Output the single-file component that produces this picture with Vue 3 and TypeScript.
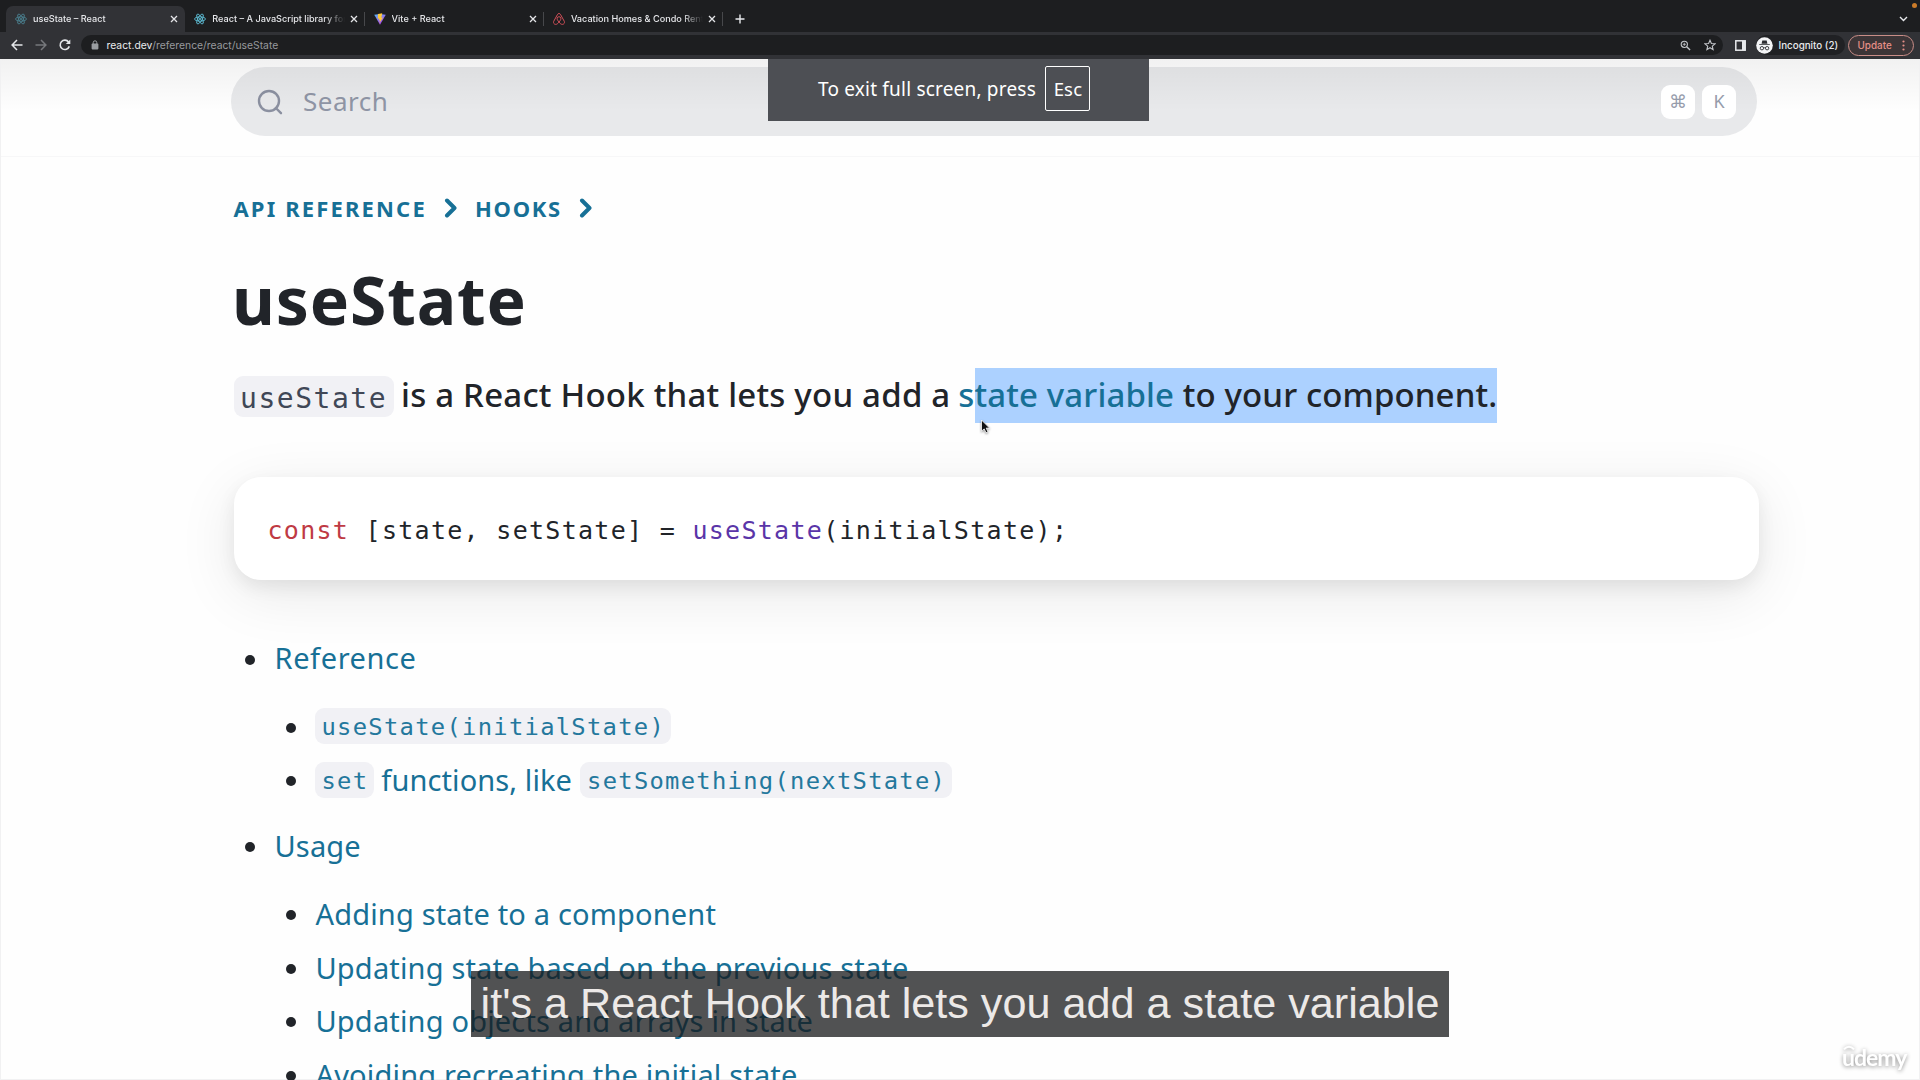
<script setup lang="ts">
interface Tab {
  title: string
  icon: 'react' | 'vite' | 'airbnb'
  active?: boolean
  dim?: boolean
}

const tabs: Tab[] = [
  { title: 'useState – React', icon: 'react', active: true, dim: true },
  { title: 'React – A JavaScript library for', icon: 'react' },
  { title: 'Vite + React', icon: 'vite' },
  { title: 'Vacation Homes & Condo Rent', icon: 'airbnb' },
]

const usage: string[] = [
  'Adding state to a component',
  'Updating state based on the previous state',
  'Updating objects and arrays in state',
  'Avoiding recreating the initial state',
]
</script>

<template>
  <div class="screen">
    <header class="chrome">
      <div class="tabstrip">
        <div v-for="tab in tabs" :key="tab.title" class="tab" :class="{ active: tab.active }">
          <svg v-if="tab.icon === 'react'" class="fav" :class="{ dim: tab.dim }" viewBox="0 0 24 24" fill="none" stroke="#61c6df" stroke-width="1.7">
            <ellipse cx="12" cy="12" rx="11" ry="4.3" />
            <ellipse cx="12" cy="12" rx="11" ry="4.3" transform="rotate(60 12 12)" />
            <ellipse cx="12" cy="12" rx="11" ry="4.3" transform="rotate(120 12 12)" />
            <circle cx="12" cy="12" r="2" fill="#61c6df" stroke="none" />
          </svg>
          <svg v-else-if="tab.icon === 'vite'" class="fav" viewBox="0 0 24 24">
            <defs>
              <linearGradient id="viteBody" x1="0" y1="0" x2="0.6" y2="1">
                <stop offset="0" stop-color="#52b5f5" />
                <stop offset="1" stop-color="#b545e8" />
              </linearGradient>
            </defs>
            <path d="M0.5 3.5 12 1.8 23.5 3.5 12 23.5Z" fill="url(#viteBody)" />
            <path d="M16.5 0.5 8 2.2 7.6 11.5 10.6 10.9 9.9 15 12 14.4 11 19.5 18 9 14.6 9.6Z" fill="#ffc93a" />
          </svg>
          <svg v-else class="fav" viewBox="0 0 24 24" fill="none" stroke="#d9525c" stroke-width="1.9">
            <path d="M12 18.2C9.6 15.3 8.2 13 8.2 11.2a3.8 3.8 0 0 1 7.6 0c0 1.8-1.4 4.1-3.8 7-2.3 2.9-4.3 4.6-6.6 4.6a4.3 4.3 0 0 1-4-6.1L8.7 3.5C9.6 1.7 10.5 1 12 1s2.4.7 3.3 2.5l7.3 13.2a4.3 4.3 0 0 1-4 6.1c-2.3 0-4.3-1.700-6.600-4.600Z" />
          </svg>
          <span class="title">{{ tab.title }}</span>
          <svg class="close" viewBox="0 0 8 8" stroke="#e4e5e8" stroke-width="1.3"><path d="M1 1 7 7M7 1 1 7" /></svg>
        </div>
        <svg class="plus" viewBox="0 0 10 10" stroke="#e8eaed" stroke-width="1.4"><path d="M5 .5V9.500M.5 5H9.500" /></svg>
        <svg class="tabmenu" viewBox="0 0 9 6" fill="none" stroke="#e8eaed" stroke-width="1.400"><path d="M1 1 4.500 4.500 8 1" /></svg>
        <i class="recording"></i>
      </div>
      <div class="toolbar">
        <svg class="nav" viewBox="0 0 12 12" fill="none" stroke="#e4e6e9" stroke-width="1.500"><path d="M11.500 6H1.200M6 1 1.100 6 6 11" /></svg>
        <svg class="nav" viewBox="0 0 12 12" fill="none" stroke="#76787c" stroke-width="1.500"><path d="M.5 6H10.800M6 1 10.900 6 6 11" /></svg>
        <svg class="nav" viewBox="0 0 12 12" fill="none" stroke="#e4e6e9" stroke-width="1.600"><path d="M10.300 7.400A4.700 4.700 0 1 1 9.600 2.900" /><path d="M11.300.6V5.100H6.800Z" fill="#e4e6e9" stroke="none" /></svg>
        <div class="omnibox">
          <svg class="lock" viewBox="0 0 8 10"><rect x=".6" y="3.600" width="6.800" height="5.800" rx=".8" fill="#9a9da1" /><path d="M2.200 4V2.600a1.800 1.800 0 0 1 3.600 0V4" fill="none" stroke="#9a9da1" stroke-width="1" /></svg>
          <span class="host">react.dev</span><span class="path">/reference/react/useState</span>
          <svg class="mag" viewBox="0 0 12 12" fill="none" stroke="#c2c5c9"><circle cx="4.700" cy="4.700" r="3.400" stroke-width="1.200" /><path d="M7.300 7.300 11 11" stroke-width="1.500" /><path d="M3 4.700H6.400M4.700 3V6.400" stroke-width=".9" /></svg>
          <svg class="star" viewBox="0 0 12 12" fill="none" stroke="#c2c5c9" stroke-width="1.100"><path d="M6 1.200 7.400 4.500 11 4.800 8.300 7.100 9.100 10.600 6 8.700 2.900 10.600 3.700 7.100 1 4.800 4.600 4.500Z" /></svg>
        </div>
        <svg class="panel" viewBox="0 0 11 11"><rect x=".8" y=".8" width="9.400" height="9.400" fill="none" stroke="#e8eaed" stroke-width="1.500" /><rect x="7" y="1" width="3.500" height="9" fill="#e8eaed" /></svg>
        <div class="incognito">
          <svg viewBox="0 0 17 17">
            <circle cx="8.500" cy="8.500" r="8.300" fill="#f3f4f6" />
            <path d="M5.600 6.800 6.300 3.600H10.700L11.400 6.800ZM3.200 7.200H13.800V8.100H3.200Z" fill="#2b2c30" />
            <path d="M7.600 11C8.200 10.600 8.800 10.600 9.400 11" fill="none" stroke="#2b2c30" stroke-width=".8" />
            <circle cx="5.900" cy="11.200" r="1.700" fill="none" stroke="#2b2c30" stroke-width=".9" />
            <circle cx="11.100" cy="11.200" r="1.700" fill="none" stroke="#2b2c30" stroke-width=".9" />
          </svg>
          <span>Incognito (2)</span>
        </div>
        <div class="update">
          <span>Update</span>
          <svg viewBox="0 0 3 11" fill="#e58f87"><circle cx="1.500" cy="1.500" r="1.100" /><circle cx="1.500" cy="5.500" r="1.100" /><circle cx="1.500" cy="9.500" r="1.100" /></svg>
        </div>
      </div>
    </header>

    <main class="page">
      <div class="searchbar">
        <div class="search">
          <svg class="lens" viewBox="0 0 26 26" fill="none" stroke="#8b90a0" stroke-width="2.400"><circle cx="12" cy="12" r="10" /><path d="M18.800 19 24 24.200" stroke-linecap="round" /></svg>
          <span class="placeholder">Search</span>
          <kbd>⌘</kbd>
          <kbd>K</kbd>
        </div>
      </div>

      <article class="content">
        <nav class="crumbs">
          <a class="api">API REFERENCE</a>
          <svg viewBox="0 0 14 20" fill="none" stroke="#177096" stroke-width="4" stroke-linecap="round" stroke-linejoin="round"><path d="M3 2.500 10.500 10 3 17.500" /></svg>
          <a class="hooks">HOOKS</a>
          <svg viewBox="0 0 14 20" fill="none" stroke="#177096" stroke-width="4" stroke-linecap="round" stroke-linejoin="round"><path d="M3 2.500 10.500 10 3 17.500" /></svg>
        </nav>
        <h1>useState</h1>
        <div class="intro">
          <code>useState</code>
          <p>is a React Hook that lets you add a <a class="lead">s</a><span class="selected"><a>tate variable</a> to your component.</span></p>
        </div>
        <pre class="card"><span class="kw">const</span> [state, setState] = <span class="fn">useState</span>(initialState);</pre>

        <ul class="toc">
          <li class="row top"><a class="wide">Reference</a></li>
          <li class="row sub"><code>useState(initialState)</code></li>
          <li class="row sub"><code>set</code><a class="mid">functions, like</a><code>setSomething(nextState)</code></li>
          <li class="row top second"><a>Usage</a></li>
          <li v-for="item in usage" :key="item" class="row sub"><a>{{ item }}</a></li>
        </ul>
      </article>
    </main>

    <div class="exit">
      <span>To exit full screen, press</span>
      <b>Esc</b>
    </div>

    <svg class="cursor" viewBox="0 0 12 16"><path d="M1.500 1V12.200L4.200 9.900 6 13.800 8 12.900 6.200 9.100H9.600Z" fill="#111" stroke="#fff" stroke-width=".8" /></svg>

    <div class="caption">it's a React Hook that lets you add a state variable</div>

    <div class="udemy">
      <svg viewBox="0 0 12 5" fill="none" stroke="#fff" stroke-width="2"><path d="M1 4.200Q6-.8 11 4.200" /></svg>
      <span>udemy</span>
    </div>
  </div>
</template>

<style>
html, body { margin: 0; overflow: hidden; background: #fff; }
</style>

<style scoped>
.screen {
  position: relative;
  width: 1920px;
  height: 1080px;
  overflow: hidden;
  background: #fefefe;
  color: #212429;
  font-family: "Noto Sans", "Open Sans", sans-serif;
}
.screen * { box-sizing: border-box; }
.screen svg { display: block; flex: none; }

/* browser chrome */
.chrome { height: 59px; font-family: Inter, Roboto, sans-serif; background: #313236; }
.tabstrip { position: relative; display: flex; height: 32px; padding: 6px 0 0 6px; background: #1d1e20; }
.tab {
  position: relative;
  display: flex;
  align-items: center;
  width: 179.300px;
  height: 26px;
  padding: 0 7px 0 9px;
}
.tab.active { background: #313236; border-radius: 7px 7px 0 0; }
.tab:not(.active)::after {
  content: "";
  position: absolute;
  right: 0;
  top: 6px;
  width: 1px;
  height: 14px;
  background: #47484b;
}
.fav { width: 12px; height: 12px; }
.fav.dim { opacity: .55; }
.title {
  flex: 1;
  height: 16px;
  margin: 0 4px 0 6px;
  overflow: hidden;
  white-space: nowrap;
  color: #e6e7ea;
  font-size: 9.150px;
  font-weight: 500;
  line-height: 16px;
  -webkit-mask-image: linear-gradient(90deg, #000 calc(100% - 22px), transparent calc(100% - 1px));
  mask-image: linear-gradient(90deg, #000 calc(100% - 22px), transparent calc(100% - 1px));
}
.close { width: 8px; height: 8px; }
.plus { width: 10px; height: 10px; margin: 8px 0 0 12px; }
.tabmenu { width: 9px; height: 6px; margin: 10px 12px 0 auto; }
.recording {
  position: absolute;
  right: 3px;
  top: 3px;
  width: 5px;
  height: 5px;
  border-radius: 50%;
  background: #cb7b29;
}
.toolbar { display: flex; align-items: center; height: 27px; padding: 0 6px 1px 10.500px; }
.nav { width: 12px; height: 12px; margin-right: 12px; }
.omnibox {
  display: flex;
  align-items: center;
  width: 1642px;
  height: 20.500px;
  margin-left: -1.500px;
  padding: 0 7px 0 10px;
  border-radius: 11px;
  background: #1d1e20;
  font-size: 10.330px;
  line-height: 20px;
}
.lock { width: 8px; height: 10px; margin-right: 7.500px; }
.host { color: #e8eaed; }
.path { color: #97999d; }
.mag { width: 11px; height: 11px; margin-left: auto; }
.star { width: 12px; height: 12px; margin-left: 13px; }
.panel { width: 11px; height: 11px; margin-left: 12px; }
.incognito {
  display: flex;
  align-items: center;
  gap: 6px;
  width: 89px;
  height: 20px;
  margin-left: 9.500px;
  border-radius: 10px;
  background: #202124;
  color: #e8eaed;
  font-size: 9.800px;
  font-weight: 500;
  white-space: nowrap;
}
.incognito svg { width: 17px; height: 17px; }
.update {
  display: flex;
  align-items: center;
  justify-content: space-between;
  width: 66px;
  height: 21px;
  margin-left: 3.500px;
  padding: 0 8px 0 8.500px;
  border: 1px solid #c98d87;
  border-radius: 11px;
  background: #3c3537;
  color: #e58f87;
  font-size: 9.900px;
  font-weight: 500;
}
.update svg { width: 3px; height: 11px; }

/* page */
.page {
  position: relative;
  height: 1021px;
  border: 1px solid #f1f1f2;
  border-top: 0;
}
.page::before {
  content: "";
  position: absolute;
  z-index: 1;
  inset: 0 0 auto 0;
  height: 52px;
  background: linear-gradient(rgba(0, 0, 0, .05), transparent);
}
.searchbar { height: 98px; padding: 8px 0 0 230px; border-bottom: 1px solid #f7f7f8; }
.search {
  display: flex;
  align-items: center;
  width: 1525.500px;
  height: 69px;
  padding: 0 20.500px 0 26px;
  border-radius: 35px;
  background: #e8e9eb;
}
.lens { width: 26px; height: 26px; margin-top: 1px; }
.placeholder {
  flex: 1;
  padding-left: 20px;
  color: #8f95a5;
  font-size: 26px;
  letter-spacing: .500px;
  line-height: 40px;
  margin-top: -2px;
}
kbd {
  position: relative;
  z-index: 2;
  width: 34px;
  height: 34px;
  margin-left: 7px;
  border-radius: 9px;
  background: #fff;
  color: #969cab;
  font: 18px/33px "Noto Sans", "DejaVu Sans", sans-serif;
  text-align: center;
}
.content { padding: 36px 0 0 232.500px; }
.crumbs {
  display: flex;
  align-items: center;
  height: 30px;
  color: #177096;
  font-size: 22px;
  font-weight: 700;
  letter-spacing: 2.150px;
  line-height: 30px;
  white-space: nowrap;
}
.crumbs svg { width: 14px; height: 20px; }
.api { width: 210px; }
.hooks { width: 104px; margin-left: 17.500px; letter-spacing: 1.700px; }
h1 {
  height: 80px;
  margin: 36px 0 28px -1.500px;
  font-size: 66px;
  font-weight: 700;
  letter-spacing: .850px;
  line-height: 80px;
}
.intro { display: flex; align-items: center; height: 56px; }
.intro p {
  margin: 0 0 0 7.500px;
  font-size: 33px;
  font-weight: 500;
  letter-spacing: .220px;
  line-height: 56px;
  white-space: nowrap;
}
a { color: #177096; }
.lead { margin-left: -1px; }
.selected { padding: 4px 0 6px; background: #acd1ff; letter-spacing: .120px; }
code, .card { font-family: "DejaVu Sans Mono", "Liberation Mono", monospace; white-space: pre; }
.intro code {
  width: 160px;
  height: 41px;
  margin-top: 3px;
  padding-left: 6.500px;
  border-radius: 9px;
  background: #f1f1f5;
  color: #404756;
  font-size: 28px;
  letter-spacing: 1.530px;
  line-height: 45px;
}
.card {
  width: 1525.500px;
  height: 103px;
  margin: 54px 0 58px;
  padding-left: 34px;
  border-radius: 27px;
  background: #fff;
  box-shadow: 0 14px 60px rgba(0, 0, 0, .09), 0 7px 18px rgba(0, 0, 0, .07);
  font-size: 25px;
  letter-spacing: 1.290px;
  line-height: 107px;
}
.kw { color: #bf3a44; }
.fn { color: #5a35a8; }
.toc { margin: 0; padding: 0; list-style: none; }
.row {
  display: flex;
  align-items: center;
  font-size: 29px;
  letter-spacing: .170px;
  white-space: nowrap;
}
.row::before {
  content: "";
  width: 10px;
  height: 10px;
  margin-top: 3px;
  border-radius: 50%;
  background: #212429;
}
.top { height: 40px; margin-bottom: 21.400px; padding-left: 11.500px; line-height: 40px; }
.top::before { margin-right: 19.500px; }
.top.second { margin-top: 19.400px; }
.sub { height: 53.500px; padding-left: 52.500px; line-height: 53px; }
.sub::before { margin-right: 18.500px; }
.wide { letter-spacing: .6px; }
.sub > a { margin-left: 1px; }
.sub > .mid { margin: 0 8px 0 7px; letter-spacing: .1px; }
.sub code {
  height: 36px;
  margin-top: 0;
  padding: 0 6px 0 7px;
  border-radius: 9px;
  background: #f1f1f5;
  color: #24789d;
  font-size: 23.800px;
  letter-spacing: 1.290px;
  line-height: 38px;
}

/* overlays */
.exit {
  position: absolute;
  left: 768px;
  top: 59px;
  z-index: 3;
  display: flex;
  align-items: center;
  width: 381px;
  height: 62px;
  padding: 0 0 2px 50px;
  background: #4d4f54;
  color: #fff;
  font-size: 19px;
  letter-spacing: .2px;
  white-space: nowrap;
}
.exit b {
  width: 45px;
  height: 45px;
  margin: -1px 0 0 9.500px;
  border: 1px solid #fff;
  border-radius: 2px;
  font-size: 18.500px;
  font-weight: 400;
  line-height: 43px;
  text-align: center;
}
.cursor { position: absolute; left: 980px; top: 419px; width: 12px; height: 16px; filter: drop-shadow(0 1px 1px rgba(0, 0, 0, .4)); }
.caption {
  position: absolute;
  left: 471px;
  top: 971px;
  width: 978px;
  height: 66px;
  background: rgba(23, 24, 26, .75);
  color: #ece9e7;
  font: 43.200px/65px "Liberation Sans", Arial, sans-serif;
  text-align: center;
  white-space: nowrap;
}
.udemy {
  position: absolute;
  left: 1842px;
  top: 1045px;
  color: #fff;
  font: 700 23px/24px Lato, sans-serif;
  letter-spacing: -1px;
  filter: drop-shadow(0 1px 2px rgba(0, 0, 0, .45));
}
.udemy svg { width: 12px; height: 5px; margin-left: 1px; }
.udemy span { display: block; margin-top: -5px; }
</style>
